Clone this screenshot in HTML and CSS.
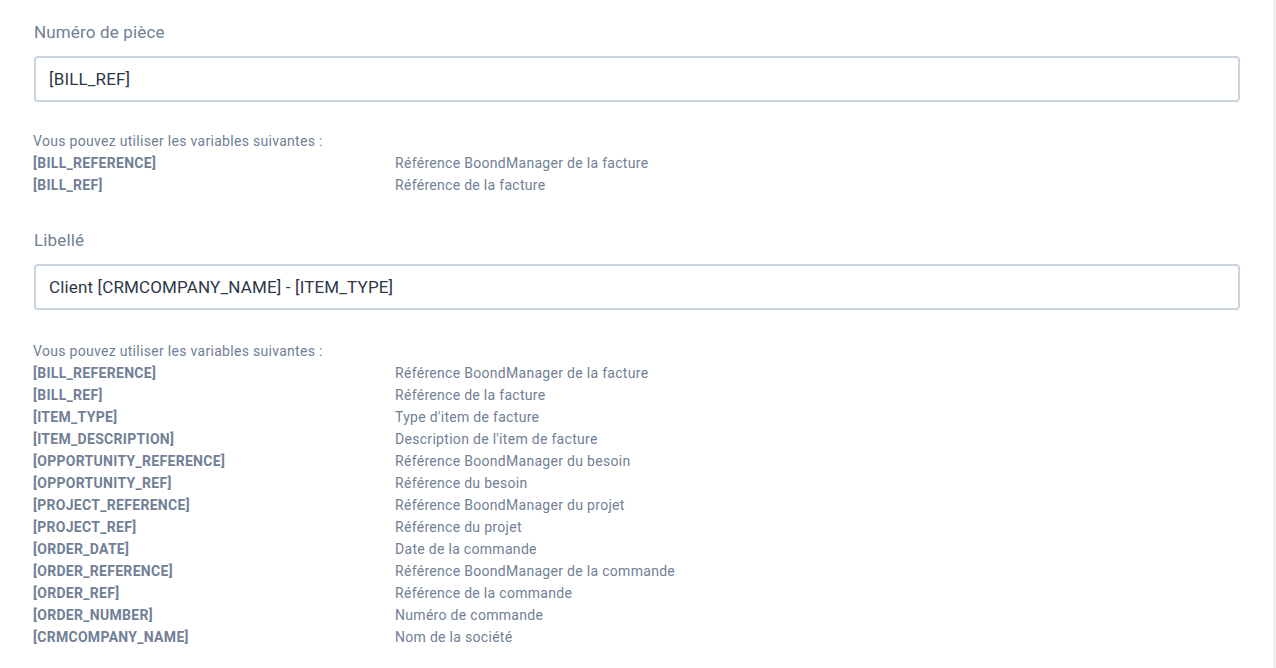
FILE: index.html
```html
<!DOCTYPE html>
<html>

<head>
	<meta charset="UTF-8">
	<meta name="viewport" content="width=device-width, initial-scale=1.0">
	<title>Numérotation des factures</title>
	<link rel="stylesheet" href="styles.css">
</head>

<body>
	<div class="page">
		<div class="container">
			<div class="field">
				<label class="label">Numéro de pièce</label>
				<input type="text" class="input" value="[BILL_REF]">
				<div class="vars">
					<div class="vars-title">Vous pouvez utiliser les variables suivantes :</div>
					<div class="vars-list">
						<span class="var">[BILL_REFERENCE]</span><span class="desc">Référence BoondManager de la facture</span>
						<span class="var">[BILL_REF]</span><span class="desc">Référence de la facture</span>
					</div>
				</div>
			</div>
			<div class="field">
				<label class="label">Libellé</label>
				<input type="text" class="input" value="Client [CRMCOMPANY_NAME] - [ITEM_TYPE]">
				<div class="vars vars-long">
					<div class="vars-title">Vous pouvez utiliser les variables suivantes :</div>
					<div class="vars-list">
						<span class="var">[BILL_REFERENCE]</span><span class="desc">Référence BoondManager de la facture</span>
						<span class="var">[BILL_REF]</span><span class="desc">Référence de la facture</span>
						<span class="var">[ITEM_TYPE]</span><span class="desc">Type d'item de facture</span>
						<span class="var">[ITEM_DESCRIPTION]</span><span class="desc">Description de l'item de facture</span>
						<span class="var">[OPPORTUNITY_REFERENCE]</span><span class="desc">Référence BoondManager du besoin</span>
						<span class="var">[OPPORTUNITY_REF]</span><span class="desc">Référence du besoin</span>
						<span class="var">[PROJECT_REFERENCE]</span><span class="desc">Référence BoondManager du projet</span>
						<span class="var">[PROJECT_REF]</span><span class="desc">Référence du projet</span>
						<span class="var">[ORDER_DATE]</span><span class="desc">Date de la commande</span>
						<span class="var">[ORDER_REFERENCE]</span><span class="desc">Référence BoondManager de la commande</span>
						<span class="var">[ORDER_REF]</span><span class="desc">Référence de la commande</span>
						<span class="var">[ORDER_NUMBER]</span><span class="desc">Numéro de commande</span>
						<span class="var">[CRMCOMPANY_NAME]</span><span class="desc">Nom de la société</span>
					</div>
				</div>
			</div>
		</div>
		<div class="edge"></div>
	</div>
</body>

</html>
```

FILE: styles.css
```css
* {
	margin: 0px;
	padding: 0px;
	box-sizing: border-box;
}

body {
	font-family: Roboto, "Liberation Sans", sans-serif;
	background-color: #ffffff;
	color: #718096;
	height: 668px;
	overflow: hidden;
}

.page {
	display: flex;
	height: 100%;
}

.container {
	flex: 1;
	padding: 20px 33px 0px 34px;
}

.edge {
	width: 3px;
	background-color: #edf0f4;
}

.field {
	display: flex;
	flex-direction: column;
	padding-bottom: 32px;
}

.label {
	font-size: 17px;
	line-height: 24px;
	letter-spacing: 0.15px;
	color: #718096;
	margin-bottom: 12px;
}

.input {
	height: 46px;
	width: 100%;
	border: 2px solid #cbd5e0;
	border-radius: 4px;
	padding: 0px 13px;
	font-family: inherit;
	font-size: 17px;
	letter-spacing: 0.15px;
	color: #2d3748;
	outline: none;
}

.vars {
	margin-top: 28px;
	margin-left: -1px;
	font-size: 14px;
	line-height: 22px;
	letter-spacing: 0.3px;
}

.vars-long {
	margin-top: 30px;
}

.vars-list {
	display: grid;
	grid-template-columns: 362px 1fr;
}

.var {
	font-weight: 700;
}
```
